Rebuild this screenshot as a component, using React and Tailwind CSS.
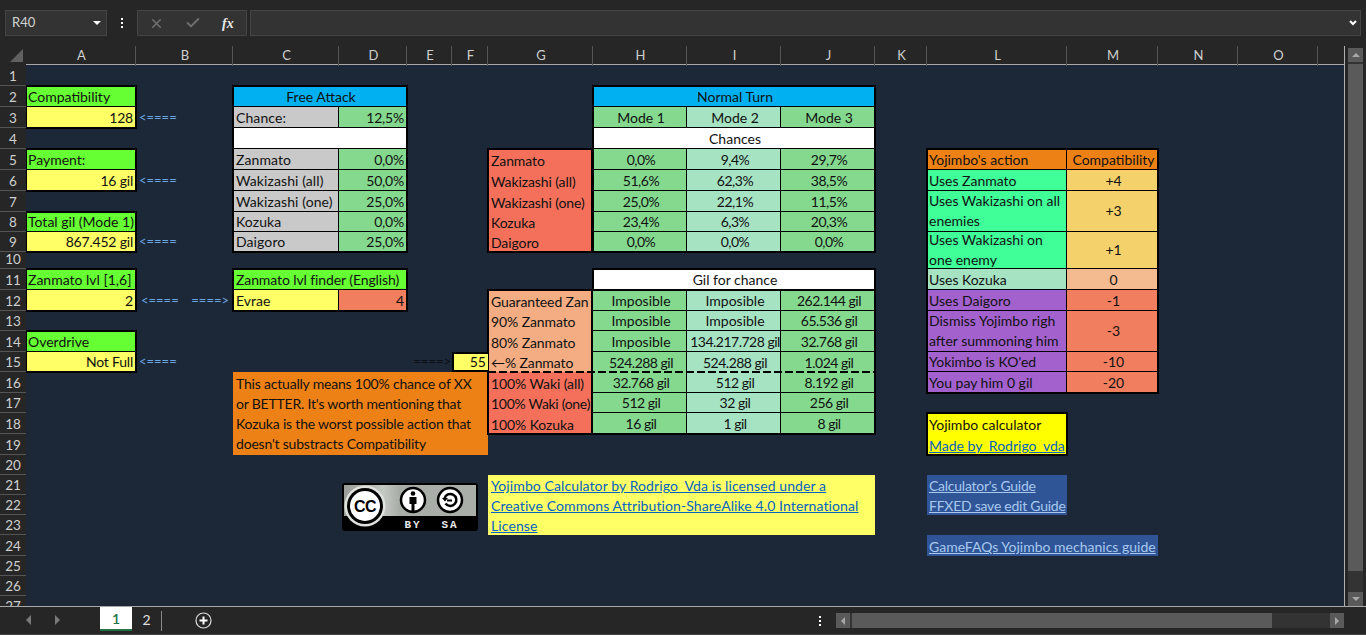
import { twMerge } from "tailwind-merge"
import { X, Check } from "lucide-react"

const columns = ["A", "B", "C", "D", "E", "F", "G", "H", "I", "J", "K", "L", "M", "N", "O", ""]
const rows = Array.from({ length: 27 }, (_, i) => i + 1)

const GREEN = "bg-[#84d98f]"
const MINT = "bg-[#a6e3c3]"
const GRAY = "bg-[#c9c9c9]"
const YELLOW = "bg-[#ffff66]"
const LIME = "bg-[#66ff33]"
const BLUE = "bg-[#00b0f0]"
const RED = "bg-[#f4705a]"
const SALMON = "bg-[#f4ad83]"
const CORAL = "bg-[#f17f5f]"
const PURPLE = "bg-[#a361cd]"
const SEA = "bg-[#40ff99]"
const GOLD = "bg-[#f4d16a]"

const Cell = ({ className, children }) => (
  <div className={twMerge("flex items-end px-0.5 leading-[18px] whitespace-nowrap overflow-hidden border-r border-b border-black", className)}>
    {children}
  </div>
)

const Center = ({ className, children }) => <Cell className={twMerge("justify-center pl-[3px] pr-0", className)}>{children}</Cell>
const Num = ({ className, children }) => <Center className={twMerge("tracking-[-0.5px]", className)}>{children}</Center>
const Right = ({ className, children }) => <Cell className={twMerge("justify-end tracking-[-0.2px]", className)}>{children}</Cell>
const Wrapped = ({ className, children }) => (
  <Cell className={twMerge("row-span-2 items-center whitespace-normal leading-5", className)}>{children}</Cell>
)
const Side = ({ className, children }) => <Cell className={twMerge("border-b-0 border-r-2 pl-[3px] pr-0 tracking-[-0.1px]", className)}>{children}</Cell>
const Label = ({ className, children }) => <Cell className={twMerge("pl-[3px] tracking-[0.1px]", GRAY, className)}>{children}</Cell>

const Block = ({ className, children }) => (
  <div className={twMerge("relative z-10 grid grid-cols-subgrid grid-rows-subgrid outline-2 -outline-offset-1 outline-black", className)}>
    {children}
  </div>
)

const Arrow = ({ className, children }) => (
  <div className={twMerge("flex items-end pb-px leading-5 text-[#6ba5e2] text-[13px]", className)}>{children}</div>
)

const CcLogo = () => (
  <svg width="136" height="48" viewBox="0 0 136 48">
    <defs>
      <linearGradient id="plate" x1="0" x2="1" y1="0" y2="0">
        <stop offset="0" stopColor="#9a9e98" />
        <stop offset="0.3" stopColor="#c4c8c2" />
        <stop offset="0.42" stopColor="#a9ada7" />
        <stop offset="1" stopColor="#aaaea8" />
      </linearGradient>
    </defs>
    <rect x="0" y="0" width="136" height="48" rx="3" fill="#000" />
    <rect x="2" y="2" width="132" height="31" fill="url(#plate)" />
    <circle cx="23" cy="23" r="20.5" fill="#dfe2de" />
    <circle cx="23" cy="23" r="18" fill="#000" />
    <circle cx="23" cy="23" r="15" fill="#fff" />
    <text x="23" y="28.5" textAnchor="middle" fontFamily="Liberation Sans, sans-serif" fontWeight="700" fontSize="16" letterSpacing="-0.5" fill="#000">CC</text>
    <circle cx="71" cy="17" r="12" fill="#fff" stroke="#000" strokeWidth="2.5" />
    <circle cx="71" cy="10.5" r="2.3" fill="#000" />
    <path d="M67.5 14h7v7h-2v7h-3v-7h-2z" fill="#000" />
    <circle cx="108" cy="17" r="12" fill="#fff" stroke="#000" strokeWidth="2.5" />
    <path d="M102.5 15.5a6 6 0 1 1 1 5" fill="none" stroke="#000" strokeWidth="2.5" />
    <path d="M100 15l3 3.5 3-3.5z M105 16.5h5v2h-5z" fill="#000" />
    <text x="71" y="45" textAnchor="middle" fontFamily="Liberation Mono, monospace" fontWeight="700" fontSize="11" letterSpacing="2" fill="#e8e8e8">BY</text>
    <text x="108" y="45" textAnchor="middle" fontFamily="Liberation Mono, monospace" fontWeight="700" fontSize="11" letterSpacing="2" fill="#e8e8e8">SA</text>
  </svg>
)

const Toolbar = () => (
  <div className="flex h-[46px] items-start pt-[10px] pl-[5px] pr-[5px] text-[#d4d4d4]">
    <div className="flex h-[26px] w-[102px] items-center justify-between border border-[#444] bg-[#333] pl-[6px] pr-[5px] text-[13px]">
      <span>R40</span>
      <span className="h-0 w-0 border-x-[4px] border-t-[4px] border-x-transparent border-t-white" />
    </div>
    <div className="flex h-[26px] w-[30px] flex-col items-center justify-center gap-[2px]">
      <span className="h-[2px] w-[2px] bg-white" />
      <span className="h-[2px] w-[2px] bg-white" />
      <span className="h-[2px] w-[2px] bg-white" />
    </div>
    <div className="flex h-[26px] w-[110px] items-center border border-[#444] bg-[#333] pl-[11px]">
      <X size={15} strokeWidth={2.5} className="text-[#6f6f6f]" />
      <Check size={16} strokeWidth={3} className="ml-[21px] text-[#6f6f6f]" />
      <span className="ml-[21px] font-['Liberation_Serif',serif] text-[14px] font-bold italic text-[#e8e8e8]">fx</span>
    </div>
    <div className="ml-[3px] flex h-[26px] flex-1 items-center justify-end border border-[#444] bg-[#333] pr-[3px]">
      <svg width="8" height="6" viewBox="0 0 8 6">
        <path d="M1 1l3 3 3-3" fill="none" stroke="#fff" strokeWidth="2" />
      </svg>
    </div>
  </div>
)

const VScroll = () => (
  <div className="ml-[3px] mt-[2px] flex w-[15px] flex-col bg-[#333]">
    <div className="flex h-[14px] items-center justify-center bg-[#5a5a5a]">
      <span className="h-0 w-0 border-x-[4px] border-b-[4px] border-x-transparent border-b-[#a8a8a8]" />
    </div>
    <div className="mt-[2px] h-[507px] bg-[#5a5a5a]" />
    <div className="flex-1" />
    <div className="flex h-[14px] items-center justify-center bg-[#5a5a5a]">
      <span className="h-0 w-0 border-x-[4px] border-t-[4px] border-x-transparent border-t-[#a8a8a8]" />
    </div>
  </div>
)

const Sheet = () => (
  <div className="grid h-[560px] w-[1345px] overflow-hidden border-r border-[#b0b0b0] bg-[#1c2838] text-[14px] text-[#111] grid-cols-[26px_110px_97px_106px_68px_45px_36px_105px_94px_94px_94px_52px_140px_91px_80px_80px_26px] grid-rows-[19px_21px_21px_21px_21px_21px_21px_21px_20px_20px_17px_21px_21px_20px_21px_20px_21px_20px_21px_21px_20px_20px_20px_20px_21px_20px_20px_20px]">
    {/* headers */}
    <div className="relative z-20 col-start-1 row-start-1 flex items-end justify-end bg-[#262626] pb-[3px] pr-[3px]">
      <svg width="13" height="13" viewBox="0 0 13 13">
        <path d="M13 0v13H0z" fill="#606060" />
      </svg>
    </div>
    <div className="col-span-16 col-start-2 row-start-1 grid grid-cols-subgrid border-b border-[#a8a8a8] bg-[#262626]">
      {columns.map((c, i) => (
        <div key={i} className="flex items-center justify-center border-r border-[#555] pl-[2px] text-[13px] text-[#cfcfcf] last:border-r-0">
          {c}
        </div>
      ))}
    </div>
    <div className="relative z-20 col-start-1 row-span-27 row-start-2 grid grid-rows-subgrid bg-[#262626]">
      {rows.map((r) => (
        <div key={r} className="flex items-end justify-center border-b border-[#555] text-[13.5px] leading-[18px] text-[#cfcfcf]">
          {r}
        </div>
      ))}
    </div>

    {/* column A */}
    <Block className="col-start-2 row-span-2 row-start-3">
      <Cell className={LIME}>Compatibility</Cell>
      <Right className={YELLOW}>128</Right>
    </Block>
    <Arrow className="col-start-3 row-start-4 pl-[3px]">{"<===="}</Arrow>
    <Block className="col-start-2 row-span-2 row-start-6">
      <Cell className={LIME}>Payment:</Cell>
      <Right className={YELLOW}>16 gil</Right>
    </Block>
    <Arrow className="col-start-3 row-start-7 pl-[3px]">{"<===="}</Arrow>
    <Block className="col-start-2 row-span-2 row-start-9">
      <Cell className={LIME}>Total gil (Mode 1)</Cell>
      <Right className={YELLOW}>867.452 gil</Right>
    </Block>
    <Arrow className="col-start-3 row-start-10 pl-[3px]">{"<===="}</Arrow>
    <Block className="col-start-2 row-span-2 row-start-12">
      <Cell className={LIME}>Zanmato lvl [1,6]</Cell>
      <Right className={YELLOW}>2</Right>
    </Block>
    <Arrow className="col-start-3 row-start-13 justify-between pl-[5px] pr-[4px]">
      <span>{"<===="}</span>
      <span>{"====>"}</span>
    </Arrow>
    <Block className="col-start-2 row-span-2 row-start-15">
      <Cell className={LIME}>Overdrive</Cell>
      <Right className={YELLOW}>Not Full</Right>
    </Block>
    <Arrow className="col-start-3 row-start-16 pl-[3px]">{"<===="}</Arrow>

    {/* free attack */}
    <Block className="col-span-2 col-start-4 row-span-8 row-start-3">
      <Center className={twMerge("col-span-2", BLUE)}>Free Attack</Center>
      <Label>Chance:</Label>
      <Right className={GREEN}>12,5%</Right>
      <Cell className="col-span-2 bg-white" />
      <Label>Zanmato</Label>
      <Right className={GREEN}>0,0%</Right>
      <Label>Wakizashi (all)</Label>
      <Right className={GREEN}>50,0%</Right>
      <Label>Wakizashi (one)</Label>
      <Right className={GREEN}>25,0%</Right>
      <Label>Kozuka</Label>
      <Right className={GREEN}>0,0%</Right>
      <Label>Daigoro</Label>
      <Right className={GREEN}>25,0%</Right>
    </Block>

    <Block className="col-span-2 col-start-4 row-span-2 row-start-12">
      <Cell className={twMerge("col-span-2 pl-[3px] tracking-[-0.1px]", LIME)}>Zanmato lvl finder (English)</Cell>
      <Cell className={twMerge("pl-[3px]", YELLOW)}>Evrae</Cell>
      <Right className={CORAL}>4</Right>
    </Block>

    <div className="col-start-6 row-start-16 flex items-end justify-end pb-px pr-px text-[13px] leading-5 text-[#0b0f14]">{"====>"}</div>
    <div className="relative z-20 col-start-7 row-start-16 flex items-end justify-end border-y-2 border-l-2 border-black bg-[#ffff66] px-0.5 leading-[17px]">55</div>

    <div className="col-span-4 col-start-4 row-span-4 row-start-17 bg-[#ee8115] pl-[3px] pt-[2px] leading-5 tracking-[-0.2px]">
      This actually means 100% chance of XX
      <br />
      or BETTER. It's worth mentioning that
      <br />
      Kozuka is the worst possible action that
      <br />
      doesn't substracts Compatibility
    </div>

    <div className="col-span-4 col-start-4 row-span-3 row-start-22 pl-[109px] pt-2">
      <CcLogo />
    </div>

    {/* normal turn */}
    <Block className="col-span-3 col-start-9 row-span-8 row-start-3">
      <Center className={twMerge("col-span-3", BLUE)}>Normal Turn</Center>
      <Center className={GREEN}>Mode 1</Center>
      <Center className={MINT}>Mode 2</Center>
      <Center className={GREEN}>Mode 3</Center>
      <Center className="col-span-3 bg-white">Chances</Center>
      <Num className={GREEN}>0,0%</Num>
      <Num className={MINT}>9,4%</Num>
      <Num className={GREEN}>29,7%</Num>
      <Num className={GREEN}>51,6%</Num>
      <Num className={MINT}>62,3%</Num>
      <Num className={GREEN}>38,5%</Num>
      <Num className={GREEN}>25,0%</Num>
      <Num className={MINT}>22,1%</Num>
      <Num className={GREEN}>11,5%</Num>
      <Num className={GREEN}>23,4%</Num>
      <Num className={MINT}>6,3%</Num>
      <Num className={GREEN}>20,3%</Num>
      <Num className={GREEN}>0,0%</Num>
      <Num className={MINT}>0,0%</Num>
      <Num className={GREEN}>0,0%</Num>
    </Block>
    <Block className="col-start-8 row-span-5 row-start-6">
      <Side className={RED}>Zanmato</Side>
      <Side className={RED}>Wakizashi (all)</Side>
      <Side className={RED}>Wakizashi (one)</Side>
      <Side className={RED}>Kozuka</Side>
      <Side className={RED}>Daigoro</Side>
    </Block>

    {/* gil table */}
    <Block className="col-span-3 col-start-9 row-start-12">
      <Center className="col-span-3 bg-white">Gil for chance</Center>
    </Block>
    <Block className="col-span-4 col-start-8 row-span-7 row-start-13">
      <Side className={SALMON}>Guaranteed Zan</Side>
      <Center className={GREEN}>Imposible</Center>
      <Center className={MINT}>Imposible</Center>
      <Num className={GREEN}>262.144 gil</Num>
      <Side className={SALMON}>90% Zanmato</Side>
      <Center className={GREEN}>Imposible</Center>
      <Center className={MINT}>Imposible</Center>
      <Num className={GREEN}>65.536 gil</Num>
      <Side className={SALMON}>80% Zanmato</Side>
      <Center className={GREEN}>Imposible</Center>
      <Num className={MINT}>134.217.728 gil</Num>
      <Num className={GREEN}>32.768 gil</Num>
      <Side className={SALMON}>←% Zanmato</Side>
      <Num className={twMerge("border-b-0", GREEN)}>524.288 gil</Num>
      <Num className={twMerge("border-b-0", MINT)}>524.288 gil</Num>
      <Num className={twMerge("border-b-0", GREEN)}>1.024 gil</Num>
      <Side className={RED}>100% Waki (all)</Side>
      <Num className={GREEN}>32.768 gil</Num>
      <Num className={MINT}>512 gil</Num>
      <Num className={GREEN}>8.192 gil</Num>
      <Side className={twMerge("tracking-[-0.3px]", RED)}>100% Waki (one)</Side>
      <Num className={GREEN}>512 gil</Num>
      <Num className={MINT}>32 gil</Num>
      <Num className={GREEN}>256 gil</Num>
      <Side className={RED}>100% Kozuka</Side>
      <Num className={GREEN}>16 gil</Num>
      <Num className={MINT}>1 gil</Num>
      <Num className={GREEN}>8 gil</Num>
    </Block>
    <div className="relative z-20 col-span-4 col-start-8 row-start-16 -mb-px h-[2px] self-end bg-[repeating-linear-gradient(90deg,#000_0_8px,transparent_8px_11px)]" />

    <div className="col-span-4 col-start-8 row-span-3 row-start-22 bg-[#ffff66] pl-[3px] pt-px leading-5 tracking-[0.1px] text-[#0563c1] underline">
      Yojimbo Calculator by Rodrigo_Vda is licensed under a
      <br />
      Creative Commons Attribution-ShareAlike 4.0 International
      <br />
      License
    </div>

    {/* compatibility table */}
    <Block className="col-span-2 col-start-13 row-span-12 row-start-6">
      <Cell className="bg-[#ee8115]">Yojimbo's action</Cell>
      <Center className="bg-[#ee8115]">Compatibility</Center>
      <Cell className={SEA}>Uses Zanmato</Cell>
      <Center className={GOLD}>+4</Center>
      <Wrapped className={SEA}>Uses Wakizashi on all enemies</Wrapped>
      <Center className={twMerge("row-span-2 items-center", GOLD)}>+3</Center>
      <Wrapped className={SEA}>Uses Wakizashi on one enemy</Wrapped>
      <Center className={twMerge("row-span-2 items-center", GOLD)}>+1</Center>
      <Cell className={MINT}>Uses Kozuka</Cell>
      <Center className="bg-[#f4bb90]">0</Center>
      <Cell className={PURPLE}>Uses Daigoro</Cell>
      <Center className={CORAL}>-1</Center>
      <Wrapped className={PURPLE}>Dismiss Yojimbo righ after summoning him</Wrapped>
      <Center className={twMerge("row-span-2 items-center", CORAL)}>-3</Center>
      <Cell className={PURPLE}>Yokimbo is KO'ed</Cell>
      <Center className={CORAL}>-10</Center>
      <Cell className={PURPLE}>You pay him 0 gil</Cell>
      <Center className={CORAL}>-20</Center>
    </Block>

    <Block className="col-start-13 row-span-2 row-start-19">
      <div className="flex items-end bg-[#ffff00] px-0.5 leading-[18px]">Yojimbo calculator</div>
      <div className="flex items-end bg-[#ffff00] px-0.5 leading-[18px] text-[#0563c1] underline">Made by_Rodrigo_vda</div>
    </Block>

    <div className="col-start-13 row-span-2 row-start-22 whitespace-nowrap bg-[#2f5597] pl-[2px] pt-px leading-5 tracking-[-0.25px] text-[#a9c8ee] underline">
      Calculator's Guide
      <br />
      FFXED save edit Guide
    </div>
    <div className="col-span-2 col-start-13 row-start-25 flex items-end whitespace-nowrap bg-[#2f5597] pl-[2px] leading-[18px] text-[#a9c8ee] underline">
      GameFAQs Yojimbo mechanics guide
    </div>
  </div>
)

const TabBar = () => (
  <div className="flex h-[29px] items-start border-t border-b border-t-[#a8a8a8] border-b-[#444] bg-[#262626] text-[14px]">
    <div className="ml-[26px] mt-[8px] h-0 w-0 border-y-[5px] border-r-[5px] border-y-transparent border-r-[#7a7a7a]" />
    <div className="ml-[24px] mt-[8px] h-0 w-0 border-y-[5px] border-l-[5px] border-y-transparent border-l-[#7a7a7a]" />
    <div className="ml-[40px] flex h-[24px] w-[32px] items-center justify-center border-b-[2px] border-[#217346] bg-white font-semibold text-[#217346]">1</div>
    <div className="flex h-[24px] w-[29px] items-center justify-center text-[#e0e0e0]">2</div>
    <div className="mt-[4px] h-[20px] w-px bg-[#8a8a8a]" />
    <svg className="ml-[33px] mt-[5px]" width="17" height="17" viewBox="0 0 17 17">
      <circle cx="8.5" cy="8.5" r="7.5" fill="none" stroke="#dcdcdc" strokeWidth="1.2" />
      <path d="M8.5 4.5v8M4.5 8.5h8" stroke="#fff" strokeWidth="2" />
    </svg>
    <div className="ml-[607px] mt-[9px] flex flex-col gap-[2px]">
      <span className="h-[2px] w-[2px] bg-white" />
      <span className="h-[2px] w-[2px] bg-white" />
      <span className="h-[2px] w-[2px] bg-white" />
    </div>
    <div className="ml-[15px] mt-[6px] flex h-[15px] w-[508px] bg-[#333]">
      <div className="flex w-[14px] items-center justify-center bg-[#5a5a5a]">
        <span className="h-0 w-0 border-y-[4px] border-r-[4px] border-y-transparent border-r-[#a8a8a8]" />
      </div>
      <div className="ml-[2px] w-[420px] bg-[#5a5a5a]" />
      <div className="flex-1" />
      <div className="flex w-[14px] items-center justify-center bg-[#5a5a5a]">
        <span className="h-0 w-0 border-y-[4px] border-l-[4px] border-y-transparent border-l-[#a8a8a8]" />
      </div>
    </div>
  </div>
)

export default function App() {
  return (
    <div className="flex h-[635px] w-[1366px] flex-col overflow-hidden bg-[#262626] font-['Lato','Liberation_Sans',sans-serif]">
      <Toolbar />
      <div className="flex">
        <Sheet />
        <VScroll />
      </div>
      <TabBar />
    </div>
  )
}
